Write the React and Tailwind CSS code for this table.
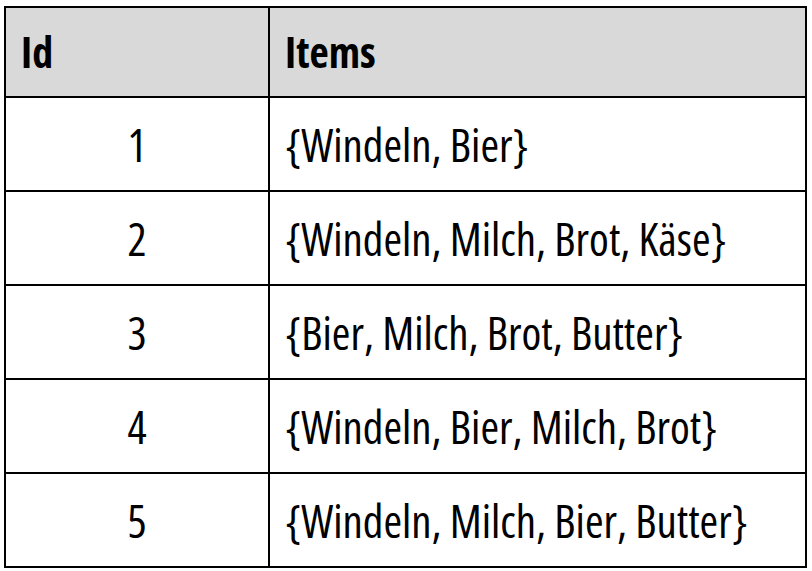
import React from "react";

const rows = [
  ["1", "{Windeln, Bier}"],
  ["2", "{Windeln, Milch, Brot, Käse}"],
  ["3", "{Bier, Milch, Brot, Butter}"],
  ["4", "{Windeln, Bier, Milch, Brot}"],
  ["5", "{Windeln, Milch, Bier, Butter}"],
];

export default function App() {
  return (
    <div
      className="w-[812px] h-[571px] bg-white pt-[6px] pl-[4px]"
      style={{ fontFamily: '"Open Sans", "Noto Sans", sans-serif', fontStretch: "75%" }}
    >
      <table className="border-collapse w-[803px] text-black leading-none">
        <thead>
          <tr className="h-[90px] bg-[#d9d9d9] text-[42px]">
            <th className="w-[264px] border-2 border-black text-left font-bold pl-[15px]">Id</th>
            <th className="border-2 border-black text-left font-bold pl-[15px]">Items</th>
          </tr>
        </thead>
        <tbody className="text-[45px]">
          {rows.map(([id, items]) => (
            <tr key={id} className="h-[94px]">
              <td className="border-2 border-black text-center">{id}</td>
              <td className="border-2 border-black text-left pl-[15px]">{items}</td>
            </tr>
          ))}
        </tbody>
      </table>
    </div>
  );
}
